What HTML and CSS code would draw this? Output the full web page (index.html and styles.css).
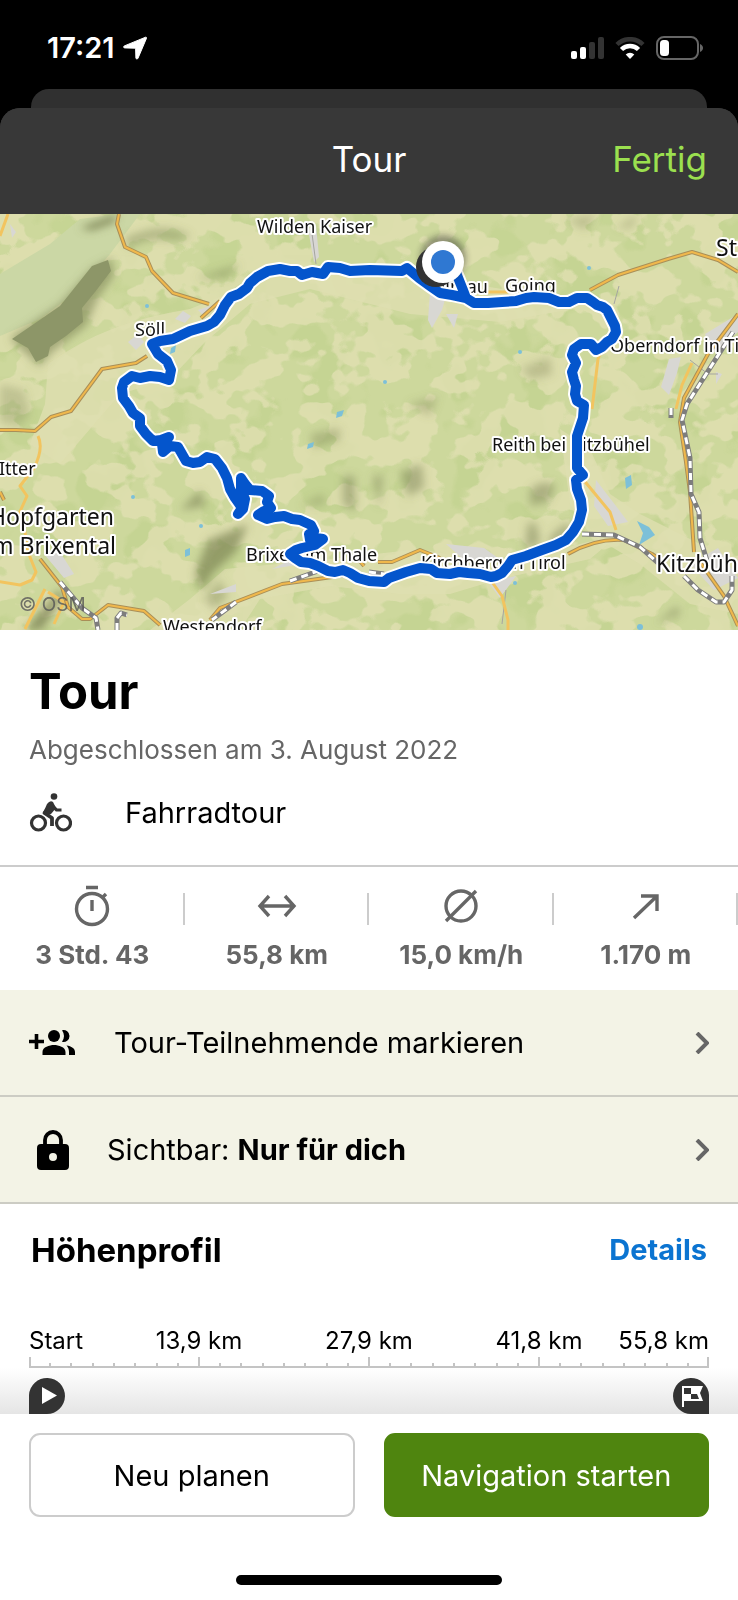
FILE: index.html
```html
<!DOCTYPE html>
<html lang="de">

<head>
  <meta charset="utf-8">
  <meta name="viewport" content="width=device-width, initial-scale=1">
  <title>Tour</title>
  <link rel="stylesheet" href="styles.css">
</head>

<body>
  <div class="statusbar">
    <div class="clock">
      <span>17:21</span>
      <svg width="24" height="24" viewBox="0 0 24 24"><path d="M22.600 1.200c.7-.2 1.100.3.9 1L15 22.200c-.5 1.200-2 1-2.100-.2l-.3-9.800-10.900-.3c-1.300-.1-1.500-1.500-.3-2z" fill="#fff" stroke="#fff"/></svg>
    </div>
    <div class="signals">
      <svg width="33" height="22" viewBox="0 0 33 22">
        <rect x="0" y="14" width="6" height="8" rx="2" fill="#fff"/>
        <rect x="9" y="10" width="6" height="12" rx="2" fill="#fff"/>
        <rect x="18" y="5" width="6" height="17" rx="2" fill="#333"/>
        <rect x="27" y="0" width="6" height="22" rx="2" fill="#333"/>
      </svg>
      <svg width="30" height="22" viewBox="0 0 30 22" fill="none">
        <path d="M2 7.500a18.500 18.500 0 0 1 26 0" stroke="#333" stroke-width="4.500"/>
        <path d="M6.500 12.500a12 12 0 0 1 17 0" stroke="#fff" stroke-width="4.500"/>
        <path d="M15 22l-4.300-4.500a6 6 0 0 1 8.600 0z" fill="#fff"/>
      </svg>
      <svg width="48" height="24" viewBox="0 0 48 24">
        <rect x="1" y="1" width="41" height="22" rx="7" fill="none" stroke="#666" stroke-width="2"/>
        <rect x="4" y="4" width="9" height="16" rx="3.500" fill="#fff"/>
        <path d="M44 8c4 1.500 4 6.500 0 8z" fill="#666"/>
      </svg>
    </div>
  </div>

  <div class="sheet-back"></div>
  <main class="sheet">
    <header class="navbar">
      <h2>Tour</h2>
      <button type="button" class="done">Fertig</button>
    </header>

    <svg class="map" viewBox="0 0 738 416" role="img" aria-label="Karte der Tour">
      <defs>
        <filter id="fields" x="0" y="0" width="100%" height="100%" color-interpolation-filters="sRGB">
          <feTurbulence type="fractalNoise" baseFrequency=".03 .036" numOctaves="3" seed="11"/>
          <feColorMatrix values="0 0 0 0 .882  0 0 0 0 .878  0 0 0 0 .7  18 0 0 0 -8.700"/>
        </filter>
        <filter id="meadow" x="0" y="0" width="100%" height="100%" color-interpolation-filters="sRGB">
          <feTurbulence type="fractalNoise" baseFrequency=".02" numOctaves="3" seed="4"/>
          <feColorMatrix values="0 0 0 0 .75  0 0 0 0 .82  0 0 0 0 .55  0 14 0 0 -7.500"/>
        </filter>
        <filter id="soft" x="-30%" y="-30%" width="160%" height="160%"><feGaussianBlur stdDeviation="4"/></filter>
        <filter id="pinshadow" x="-50%" y="-50%" width="200%" height="200%"><feGaussianBlur stdDeviation="3"/></filter>
      </defs>

      <!-- land -->
      <rect width="738" height="416" fill="#cdd89c"/>
      <rect width="738" height="416" filter="url(#meadow)" opacity=".5"/>
      <rect width="738" height="416" filter="url(#fields)" opacity=".8"/>
      <path d="M0 60L50 30 80 5 120 0h20L110 40 80 75 40 105 0 122z" fill="#cbd7a5"/>
      <path d="M48 150C90 120 130 105 190 95L300 50 420 62 560 84 590 92 500 108 410 100 310 75 250 90 205 128 170 165 120 180 90 215 60 250 30 230 45 190z" fill="#dfdfb0" opacity=".8"/>
      <path d="M225 355L330 345 420 335 500 350 620 320 590 345 500 365 450 380 400 380 330 372 260 385 240 416H150L190 385z" fill="#dfdfb0" opacity=".8"/>
      <path d="M560 215L590 235 610 280 640 300 700 330 738 350V400L690 390 640 350 590 320 570 290z" fill="#dfdfb0" opacity=".8"/>

      <!-- relief -->
      <g filter="url(#soft)" fill="#7d8455">
        <path d="M80 14L118 0 114 8 92 16z"/>
        <path d="M125 24q40-18 66-2l-14 5q-30-6-48 8zM196 64l44-14-14 14z" opacity=".45"/>
        <path d="M92 54L112 44 114 62 98 84 86 112 52 138 40 152 24 138 10 124 60 90z" opacity=".6"/>
        <path d="M0 170l24 6 6 24-10 12-20-4z" opacity=".3"/>
        <path d="M180 296l20-20 6 16z" opacity=".6"/>
        <path d="M208 326l40-16-12 28-24 22q-14 30-16-4z" opacity=".7"/>
        <path d="M204 385l16-20 8 18-14 12zM310 220l30-6 0 12-26 8zM300 292l22-12 4 10z" opacity=".4"/>
        <path d="M343 262l12 0v36l-12-8zM373 262l10 0-4 32z" opacity=".5"/>
        <path d="M530 276q12-12 26-4l-8 16-18 4zM528 310q10-8 12 20l-16 6zM550 322l18-14 4 10-22 16zM400 258l22-8 2 24-16 8z" opacity=".5"/>
        <path d="M25 416l34-40 5 4-22 36z" opacity=".8"/>
        <path d="M566 6l30-6-10 16zM616 14l22-14-6 14zM408 190l30-8-8 20zM520 155l30-12 2 18-20 4z" opacity=".35"/>
        <path d="M655 410l22-18 4 8z" opacity=".5"/>
      </g>
      <path d="M12 125L60 92 92 52 108 46 111 57 95 78 82 94 83 108 66 122 50 133 48 142 36 148 28 134z" fill="#8d9668"/>

      <!-- villages -->
      <g fill="#d8d7d3">
        <path d="M175 105l8-8 8 5-6 7zM198 96l15-5-8 12zM128 128l10-8 6 8-8 8zM308 15l8-4 3 32-5 5zM10 10l6 8-4 6zM430 78l16 4-4 14-10 18-4-8zM446 100l12 0-4 14zM669 145l12-2-4 16-8 22-8-8zM705 120l33-20v18l-26 22zM716 158l6 2-6 10zM446 330l38 4 14 10-34 2zM488 368l28-6-16 22zM596 266l20 26 12 16-20 4-14-20zM690 350l28-16 20 30-24 12zM44 340l16-2 14 22-10 4zM210 380l26-10 0 8zM272 355l24-12 0 8z"/>
      </g>
      <g fill="#7cc0d8">
        <path d="M637 307l12 6 6 8-16 10 4-12zM625 264l6-3 1 10-6 4zM337 198l7-2-2 6-6 2zM308 230l6-2-1 5-6 2zM185 336l5-2 0 7-5 2zM171 134l5-3-1 7-5 2z"/>
        <circle cx="147" cy="92" r="2"/><circle cx="133" cy="283" r="2"/><circle cx="201" cy="312" r="2"/><circle cx="520" cy="138" r="2"/><circle cx="385" cy="168" r="2"/><circle cx="589" cy="54" r="2"/><circle cx="515" cy="369" r="2"/><circle cx="640" cy="413" r="3"/>
      </g>
      <path d="M311 12l5 38M614 90l5-18M690 146l18 14h10M502 410l4-34" stroke="#a5a5a0" fill="none"/>

      <!-- minor roads -->
      <g fill="none" stroke="#f2c45f" stroke-width="3" stroke-linejoin="round">
        <path d="M0 22L8 0M38 222q6 12-4 32l-14 18 7 10-9 20 7 16 3 20 8 20-4 8-12 5-24-4M45 375l-20 40M48 378l16 10-10 22M592 195l6-50 8-20M582 264l28 34 6 18M492 368l10 14 6 24v10M676 195l6-24 10-22M486 78h22"/>
      </g>
      <!-- main roads -->
      <g class="road-casing">
        <path id="roads" d="M119 0l-2 10 8 23 21 10 6 14 21 22 36 11M220 87l-19 17M147 142l-11 7-34 6-31 42-20 6-16 14-19-1-16 0M40 345l22 28 6 20 14 12h8l18-14 36 6 16 14M210 406l10-12 62-24 36-5 28-4M364 352l-5-6M378 348h14l28-12 20 8M590 76l28-15 50-16 24-7 26 8 20 12M738 100l-30 40-24 44-4 24 6 40 4 30 4 60M568 340q28-16 56-14l28 14 12 8M700 348l24 34 14 30M0 278l4 8"/>
      </g>
      <use href="#roads" class="road-fill"/>

      <!-- railway -->
      <g class="rail">
        <path id="rail" d="M733 118l-46 72-5 16 8 38 1 36 8 18 1 26 8 26M582 320l32 1 26 12 18 16M684 362l14 14 18 12h8l8-12 0-14M60 368l22 26 14 10 2 12M117 416v-12l4-5 6 2M236 388l-24 18M290 367l28-10M369 358l15 2M671 194v10"/>
      </g>
      <use href="#rail" class="rail-dash"/>

      <g class="places">
        <text x="257" y="19">Wilden Kaiser</text>
        <text x="135" y="122">Söll</text>
        <text x="488" y="79" text-anchor="end">Ellmau</text>
        <text x="505" y="78">Going</text>
        <text x="610" y="138">Oberndorf in Tirol</text>
        <text x="-1" y="261">Itter</text>
        <text x="246" y="347">Brixen im Thale</text>
        <text x="163" y="419">Westendorf</text>
        <text x="492" y="237">Reith bei Kitzbühel</text>
        <text x="421" y="355">Kirchberg in Tirol</text>
      </g>
      <g class="towns">
        <text x="716" y="42">St</text>
        <text x="114" y="311" text-anchor="end">Hopfgarten</text>
        <text x="116" y="340" text-anchor="end">im Brixental</text>
        <text x="656" y="358">Kitzbühel</text>
      </g>
      <text class="copyright" x="19" y="397">© OSM</text>

      <g class="route-casing">
        <path id="route" d="M455 56L459 66 463 76 466 84 474 89 488 89 502 88 516 87 526 84 534 83 549 84 559 88 569 88 577 84 587 84 593 88 597 91 603 93 607 96 611 104 615 112 616 118 612 125 607 128 602 133 596 136 591 130 581 130 574 135 572 141 576 149 572 158 574 166 576 172 575 180 577 187 584 191 583 204 580 213 577 222 577 254 583 261 576 266 577 275 581 286 582 296 579 308 573 318 566 326 556 331 542 336 526 342 512 346 508 352 502 359 496 362 491 363 480 360 468 359 459 358 450 360 437 359 431 355 420 354 406 358 389 364 384 368 369 367 358 364 350 359 343 356 335 358 328 357 318 352 310 349 301 348 295 344 290 340 296 336 302 334 315 331 323 325 316 324 310 326 309 320 314 317 311 311 300 306 292 305 284 302 275 303 267 305 258 301 264 297 271 294 267 288 269 282 262 277 250 276 245 270 241 264 241 276 245 285 243 295 238 300 242 294 235 284 230 275 227 264 222 254 215 245 207 243 200 248 193 249 186 247 182 240 178 233 170 232 163 238 162 230 169 223 161 226 153 227 146 220 140 212 140 204 133 199 129 192 123 184 122 174 124 168 132 162 140 164 150 162 160 163 169 166 171 156 167 147 158 140 152 130 160 127 173 125 190 117 207 112 214 108 220 101 225 91 231 83 239 80 247 74 250 69 257 63 268 57 280 55 290 57 297 57 302 61 312 58 323 60 328 53 340 54 350 57 370 56 402 57 407 54 419 64 430 72 440 79 452 81 466 84"/>
      </g>
      <use href="#route" class="route-fill"/>
      <circle cx="443" cy="44" r="23" fill="#222" opacity=".4" filter="url(#pinshadow)"/>
      <circle cx="436" cy="53" r="20" fill="#333"/>
      <circle cx="443" cy="48" r="21" fill="#fff"/>
      <circle cx="443" cy="48" r="12" fill="#2f78d2"/>
    </svg>

    <section class="summary">
      <h1>Tour</h1>
      <p class="date">Abgeschlossen am 3. August 2022</p>
      <p class="sport">
        <svg width="43" height="40" viewBox="-1 0 43 40" fill="none" stroke="#333">
          <circle cx="8.500" cy="30" r="7" stroke-width="3.200"/>
          <circle cx="33.500" cy="30" r="7" stroke-width="3.200"/>
          <circle cx="24" cy="3.500" r="3.300" fill="#333" stroke="none"/>
          <path d="M20 13l-5.500 7 7.500 5v8" stroke-width="3.800" stroke-linejoin="round"/>
          <path d="M21 11.500l5.500 5.500h5" stroke-width="3.200"/>
          <path d="M17 11q3-4 6-2l3 6-5 6-3 1-5-2z" fill="#333" stroke="none"/>
        </svg>
        <span>Fahrradtour</span>
      </p>
    </section>

    <ul class="stats">
      <li>
        <svg width="40" height="44" viewBox="0 0 40 44" fill="none" stroke="#666" stroke-width="3.400"><circle cx="20" cy="25" r="15.500"/><path d="M14 3.500h12M20 16v11M30 14l4-4"/></svg>
        <span>3 Std. 43</span>
      </li>
      <li>
        <svg width="40" height="44" viewBox="0 0 40 44" fill="none" stroke="#666" stroke-width="3.400"><path d="M3 22h34M12 12L3 22l9 10M28 12l9 10-9 10"/></svg>
        <span>55,8 km</span>
      </li>
      <li>
        <svg width="40" height="44" viewBox="0 0 40 44" fill="none" stroke="#666" stroke-width="3.400"><circle cx="20" cy="22" r="15"/><path d="M5 37L35 7"/></svg>
        <span>15,0 km/h</span>
      </li>
      <li>
        <svg width="40" height="44" viewBox="0 0 40 44" fill="none" stroke="#666" stroke-width="3.400"><path d="M8 34L31 12M15 12h16v15"/></svg>
        <span>1.170 m</span>
      </li>
    </ul>

    <button type="button" class="row row-people">
      <svg width="47" height="28" viewBox="0 0 47 28">
        <path d="M7.500 5v15M0 12.500h15" stroke="#000" stroke-width="3.600"/>
        <circle cx="25" cy="7" r="6"/>
        <path d="M33 1.200a6 6 0 1 1 0 11.600q4-5.800 0-11.600zM13.500 26v-3c0-5 7-7 11.500-7s11.500 2 11.500 7v3zM37.500 16.500c5 .8 8.500 3 8.500 6.500v3h-6v-3c0-3-1-5-2.500-6.500z"/>
      </svg>
      <span>Tour-Teilnehmende markieren</span>
      <svg class="chevron" width="14" height="22" viewBox="0 0 14 22"><path d="M2 1l10 10L2 21"/></svg>
    </button>
    <button type="button" class="row row-visibility">
      <svg width="32" height="40" viewBox="0 0 32 40">
        <path d="M8 17V10a8 8 0 0 1 16 0v7" fill="none" stroke="#000" stroke-width="3.800"/>
        <path fill-rule="evenodd" d="M4 14h24a4 4 0 0 1 4 4v18a4 4 0 0 1-4 4H4a4 4 0 0 1-4-4V18a4 4 0 0 1 4-4zM16 23a4 4 0 1 0 0 8 4 4 0 0 0 0-8z"/>
      </svg>
      <span>Sichtbar: <b>Nur für dich</b></span>
      <svg class="chevron" width="14" height="22" viewBox="0 0 14 22"><path d="M2 1l10 10L2 21"/></svg>
    </button>

    <section class="profile">
      <div class="profile-head">
        <h3>Höhenprofil</h3>
        <a href="#details">Details</a>
      </div>
      <div class="scale">
        <span>Start</span>
        <span>13,9 km</span>
        <span>27,9 km</span>
        <span>41,8 km</span>
        <span>55,8 km</span>
      </div>
      <svg class="ruler" viewBox="0 0 680 11" fill="none" stroke="#c4c4c4">
        <path d="M0 10h680" stroke-width="2"/>
        <path d="M1 0v10M170 0v10M340 0v10M510 0v10M679 0v10" stroke-width="2"/>
        <path d="M21 6v4M42 6v4M64 6v4M85 6v4M106 6v4M128 6v4M149 6v4M191 6v4M212 6v4M234 6v4M255 6v4M276 6v4M298 6v4M319 6v4M361 6v4M382 6v4M404 6v4M425 6v4M446 6v4M468 6v4M489 6v4M531 6v4M552 6v4M574 6v4M595 6v4M616 6v4M638 6v4M659 6v4" stroke-width="2"/>
      </svg>
      <div class="pins">
        <svg width="36" height="37" viewBox="0 0 36 37"><path d="M0 37V18a18 18 0 1 1 18 19z" fill="#333"/><path d="M13 10l15 8.500L13 27z" fill="#fff"/></svg>
        <svg width="36" height="37" viewBox="0 0 36 37"><path d="M36 37V18a18 18 0 1 0-18 19z" fill="#333"/><path d="M9 9h21l-3 7 3 8H11v6H9z" fill="#fff"/><path d="M11 11h7v6h-7zM18 17h6l2 5h-8z" fill="#333"/></svg>
      </div>
    </section>

    <footer class="actions">
      <div class="buttons">
        <button type="button" class="btn">Neu planen</button>
        <button type="button" class="btn btn-primary">Navigation starten</button>
      </div>
      <div class="home-indicator"></div>
    </footer>
  </main>
</body>

</html>
```

FILE: styles.css
```css
* {
  box-sizing: border-box;
}

body {
  margin: 0;
  min-height: 100vh;
  display: flex;
  flex-direction: column;
  background: #000;
  color: #000;
  font-family: Inter, "Liberation Sans", sans-serif;
}

h1, h2, h3, p, ul {
  margin: 0;
  padding: 0;
}

button {
  font: inherit;
  color: inherit;
  border: 0;
  padding: 0;
  background: none;
}

svg {
  flex: none;
  display: block;
}

/* status bar */
.statusbar {
  height: 89px;
  padding: 6px 34px 0 47px;
  display: flex;
  justify-content: space-between;
  align-items: center;
  color: #fff;
}

.clock {
  display: flex;
  align-items: center;
  gap: 8px;
  font-size: 29px;
  font-weight: 600;
}

.signals {
  display: flex;
  align-items: center;
  gap: 11px;
}

/* sheet */
.sheet-back {
  height: 19px;
  margin: 0 31px;
  border-radius: 18px 18px 0 0;
  background: #303030;
}

.sheet {
  flex: 1;
  display: flex;
  flex-direction: column;
  background: linear-gradient(#383838 106px, #fff 106px);
  border-radius: 20px 20px 0 0;
  overflow: hidden;
}

.navbar {
  height: 106px;
  padding: 0 31px 4px;
  display: grid;
  grid-template-columns: 1fr auto 1fr;
  align-items: center;
  background: #383838;
}

.navbar h2 {
  grid-column: 2;
  font-size: 35px;
  font-weight: 400;
  color: #fff;
}

.done {
  justify-self: end;
  font-size: 35px;
  color: #9be04f;
}

/* map */
.map {
  width: 100%;
  height: auto;
}

.road-casing, .road-fill, .rail, .rail-dash, .route-casing, .route-fill {
  fill: none;
  stroke-linejoin: round;
}

.road-casing {
  stroke: #a98f58;
  stroke-width: 4px;
}

.road-fill {
  stroke: #f0b84c;
  stroke-width: 2px;
}

.rail {
  stroke: #7d7d7d;
  stroke-width: 5px;
}

.rail-dash {
  stroke: #fff;
  stroke-width: 3px;
  stroke-dasharray: 7 5;
}

.route-casing {
  stroke: #fff;
  stroke-width: 14px;
  stroke-linecap: round;
}

.route-fill {
  stroke: #0455cc;
  stroke-width: 10px;
  stroke-linecap: round;
}

.places, .towns {
  font-family: "Noto Sans", sans-serif;
  font-size: 18px;
  fill: #111;
  stroke: #fff;
  stroke-width: 4px;
  stroke-linejoin: round;
  paint-order: stroke;
}

.towns {
  font-size: 23px;
}

.copyright {
  font-size: 19px;
  fill: #555;
  opacity: .8;
}

/* summary */
.summary {
  padding: 32px 29px;
  border-bottom: 2px solid #ccc;
}

.summary h1 {
  font-size: 49px;
  line-height: 60px;
  font-weight: 700;
}

.date {
  margin-top: 12px;
  font-size: 26px;
  line-height: 32px;
  color: #666;
}

.sport {
  margin-top: 27px;
  display: flex;
  align-items: center;
  gap: 53px;
  font-size: 29px;
  line-height: 40px;
}

/* stats */
.stats {
  height: 123px;
  display: grid;
  grid-template-columns: repeat(4, 1fr);
  list-style: none;
}

.stats li {
  padding-top: 17px;
  display: flex;
  flex-direction: column;
  align-items: center;
  gap: 11px;
  font-size: 26px;
  line-height: 32px;
  font-weight: 700;
  color: #666;
  background: linear-gradient(#ccc, #ccc) right 26px / 2px 32px no-repeat;
}

/* rows */
.row {
  height: 107px;
  padding: 0 29px;
  display: flex;
  align-items: center;
  text-align: left;
  font-size: 29px;
  background: #f3f3e6;
  border-bottom: 2px solid #ccccc4;
}

.row-people {
  gap: 38px;
}

.row-visibility {
  padding-left: 37px;
  gap: 38px;
}

.row b {
  font-weight: 700;
}

.chevron {
  margin-left: auto;
  fill: none;
  stroke: #666;
  stroke-width: 4px;
}

/* elevation profile */
.profile-head {
  padding: 24px 31px 0;
  display: flex;
  justify-content: space-between;
  align-items: center;
  line-height: 44px;
}

.profile-head h3 {
  font-size: 33px;
  font-weight: 700;
}

.profile-head a {
  font-size: 29px;
  font-weight: 700;
  color: #0b74d1;
  text-decoration: none;
}

.scale {
  margin: 53px 29px 0;
  display: grid;
  grid-template-columns: 1fr 2fr 2fr 2fr 1fr;
  font-size: 24px;
  line-height: 32px;
  white-space: nowrap;
}

.scale span {
  min-width: 0;
  justify-self: center;
}

.scale span:first-child {
  justify-self: start;
}

.scale span:last-child {
  justify-self: end;
}

.ruler {
  width: calc(100% - 58px);
  margin: 0 29px;
}

.pins {
  padding: 9px 29px 0;
  display: flex;
  justify-content: space-between;
  background: linear-gradient(#fff, #e5e5e5);
}

/* bottom bar */
.actions {
  flex: 1;
  padding: 19px 29px 15px;
  display: flex;
  flex-direction: column;
  justify-content: space-between;
  align-items: center;
}

.buttons {
  width: 100%;
  display: grid;
  grid-template-columns: 1fr 1fr;
  gap: 29px;
}

.btn {
  height: 84px;
  border: 2px solid #ccc;
  border-radius: 11px;
  font-size: 29px;
}

.btn-primary {
  border-color: #4f850f;
  background: #4f850f;
  color: #fff;
}

.home-indicator {
  width: 39%;
  height: 10px;
  border-radius: 5px;
  background: #000;
}
```
